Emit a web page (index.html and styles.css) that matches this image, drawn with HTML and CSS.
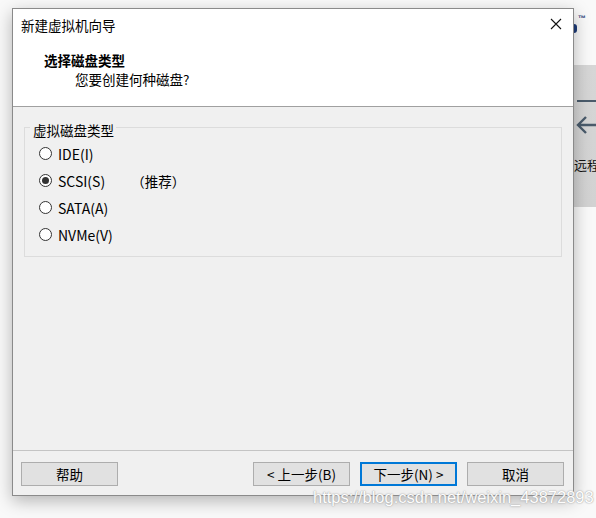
FILE: index.html
```html
<!DOCTYPE html>
<html lang="zh-CN">
<head>
<meta charset="utf-8">
<title>新建虚拟机向导</title>
<link rel="stylesheet" href="styles.css">
</head>
<body>
<div class="desktop">
  <div class="bgapp">
    <div class="logo"><span class="logo-o"></span><span class="tm">™</span></div>
    <div class="panel">
      <div class="panel-line"></div>
      <svg class="panel-arrow" width="22" height="20" viewBox="0 0 22 20"><path d="M22 10H3M11 2L3 10l8 8" fill="none" stroke="#4a5b6b" stroke-width="2.4"/></svg>
      <div class="panel-text">远程</div>
    </div>
  </div>

  <div class="dialog">
    <div class="titlebar">
      <span class="title">新建虚拟机向导</span>
      <svg class="close" width="12" height="12" viewBox="0 0 12 12"><path d="M1 1L11 11M11 1L1 11" stroke="#111" stroke-width="1.1"/></svg>
    </div>
    <div class="header">
      <div class="h-title">选择磁盘类型</div>
      <div class="h-sub">您要创建何种磁盘?</div>
    </div>
    <div class="body">
      <fieldset class="group">
        <legend>虚拟磁盘类型</legend>
        <div class="row"><span class="radio"></span><span class="label">IDE(I)</span></div>
        <div class="row"><span class="radio checked"></span><span class="label">SCSI(S)</span><span class="rec">（推荐）</span></div>
        <div class="row"><span class="radio"></span><span class="label">SATA(A)</span></div>
        <div class="row"><span class="radio"></span><span class="label">NVMe(V)</span></div>
      </fieldset>
    </div>
    <div class="footer">
      <button class="btn">帮助</button>
      <div class="spacer"></div>
      <button class="btn">&lt; 上一步(B)</button>
      <button class="btn default">下一步(N) &gt;</button>
      <button class="btn">取消</button>
    </div>
  </div>

  <div class="watermark">https://blog.csdn.net/weixin_43872893</div>
</div>
</body>
</html>
```
FILE: styles.css
```css
* { box-sizing: border-box; }
html, body { margin: 0; padding: 0; }
body {
  width: 596px;
  height: 518px;
  overflow: hidden;
  background: #f9f9f9;
  font-family: "Noto Sans CJK SC", "Microsoft YaHei", sans-serif;
  font-size: 13.5px;
  color: #000;
}
.desktop { position: relative; width: 596px; height: 518px; }

.bgapp { position: absolute; left: 574px; top: 0; width: 22px; height: 518px; overflow: hidden; }
.logo { position: absolute; left: 0; top: 14px; height: 20px; width: 22px; }
.logo-o { position: absolute; left: 0; top: 10px; width: 3px; height: 9px; background: #1d3b78; border-radius: 0 3px 3px 0; }
.tm { position: absolute; left: 4px; top: 0; font-family: "Liberation Sans", sans-serif; font-size: 8px; font-weight: bold; color: #1d3b78; }
.panel {
  position: absolute; left: 0; top: 65px; width: 22px; height: 142px;
  background: linear-gradient(#d6d6d6, #d2d2d2);
}
.panel-line { position: absolute; left: 3px; top: 35px; width: 19px; height: 2px; background: #4a5b6b; }
.panel-arrow { position: absolute; left: 1px; top: 50px; }
.panel-text { position: absolute; left: 0; top: 90px; white-space: nowrap; font-size: 13px; color: #111; }

.dialog {
  position: absolute; left: 12px; top: 8px; width: 562px; height: 488px;
  border: 1px solid #8a8a8a;
  background: #f0f0f0;
  box-shadow: 0 5px 16px rgba(0,0,0,0.28);
  display: flex; flex-direction: column;
}
.titlebar {
  height: 30px; background: #fff;
  display: flex; align-items: center; justify-content: space-between;
  padding: 0 11px 0 8px;
}
.title { line-height: 18px; position: relative; top: 1px; }
.close { display: block; }
.header {
  height: 68px; background: #fff;
  border-bottom: 1px solid #a0a0a0;
  padding: 12px 0 0 31px;
}
.h-title { font-weight: bold; line-height: 18px; }
.h-sub { line-height: 18px; margin: 1px 0 0 31px; }

.body { flex: 1; padding: 10px 11px 0 11px; }
.group {
  margin: 0; padding: 2px 0 0 14px;
  height: 140px;
  border: 1px solid #dcdcdc;
  min-width: 0;
}
.group legend { padding: 5px 2px 0 3px; margin-left: -9px; line-height: 16px; }
.row { height: 27px; display: flex; align-items: center; }
.radio {
  width: 13px; height: 13px; border-radius: 50%;
  border: 1px solid #333; background: #fff;
  display: flex; align-items: center; justify-content: center;
  flex: none;
}
.radio.checked::after { content: ""; width: 7px; height: 7px; border-radius: 50%; background: #333; }
.label { margin-left: 6px; line-height: 18px; font-size: 14px; }
.rec { margin-left: 26px; line-height: 18px; }

.footer {
  height: 45px;
  border-top: 1px solid #c4c4c4;
  display: flex; align-items: flex-start;
  padding: 11px 9px 0 8px;
  gap: 10px;
}
.spacer { flex: 1; }
.btn {
  width: 97px; height: 24px;
  border: 1px solid #adadad; background: #e1e1e1;
  font-family: inherit; font-size: 13.5px; color: #000;
  padding: 0; margin: 0; line-height: 18px;
}
.btn.default { border-color: #0078d7; box-shadow: inset 0 0 0 1px #0078d7; }

.watermark {
  position: absolute; left: 313px; top: 488px;
  font-family: "Liberation Sans", Arial, sans-serif; font-size: 16.5px;
  color: #fff; white-space: nowrap;
  text-shadow: 0 0 1px #9a9a9a, 0 0 2px #b0b0b0;
  opacity: 0.95;
}
```
